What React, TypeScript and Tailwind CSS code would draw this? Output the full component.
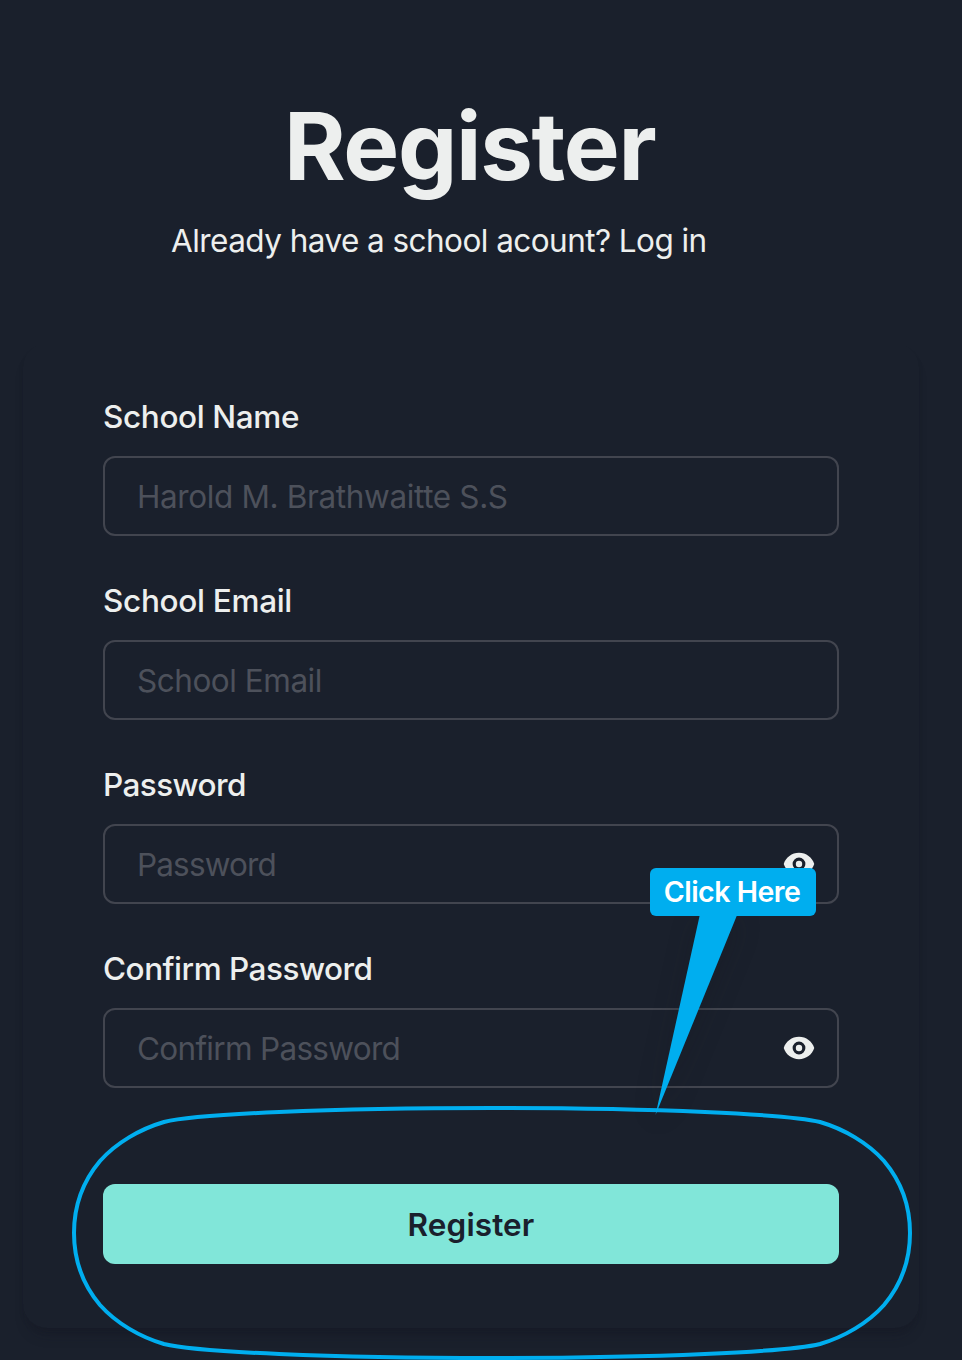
import { HiEye } from "react-icons/hi";

type FieldProps = {
  label: string;
  placeholder: string;
  labelClass: string;
  inputClass: string;
  secret?: boolean;
};

function Field({ label, placeholder, labelClass, inputClass, secret }: FieldProps) {
  return (
    <div className="flex flex-col gap-4">
      <label className={`h-12 whitespace-nowrap pt-px text-[31.5px] leading-[48px] font-medium ${labelClass}`}>{label}</label>
      <div className="flex h-20 items-center justify-between rounded-xl border-2 border-[#42454f] pr-[22px] pl-8">
        <input
          type={secret ? "password" : "text"}
          placeholder={placeholder}
          className={`h-full min-w-0 flex-1 bg-transparent text-[31.5px] outline-none placeholder:text-[#4d515b] ${inputClass}`}
        />
        {secret && <HiEye className="size-8 shrink-0" />}
      </div>
    </div>
  );
}

export default function App() {
  return (
    <main className="relative flex h-[1360px] w-[962px] flex-col overflow-hidden bg-[#1a202c] font-['Inter',sans-serif] text-[#edefee]">
      <header className="flex h-[344px] flex-col pt-[88px]">
        <h1 className="ml-[284px] h-[116px] whitespace-nowrap text-[94px] leading-[117px] font-bold tracking-[-1.3px]">Register</h1>
        <p className="mt-[13px] ml-[171px] h-12 whitespace-nowrap text-[31.5px] leading-[48px] tracking-[-0.55px]">Already have a school acount? Log in</p>
      </header>

      <form className="ml-[23px] flex h-[984px] w-[896px] flex-col rounded-[24px] px-20 pt-12 shadow-[0_12px_14px_-6px_rgba(20,20,30,0.25),0_4px_6px_-2px_rgba(20,20,30,0.2)]">
        <div className="flex flex-col gap-10">
          <Field label="School Name" placeholder="Harold M. Brathwaitte S.S" labelClass="tracking-[-0.36px]" inputClass="tracking-[-0.37px]" />
          <Field label="School Email" placeholder="School Email" labelClass="tracking-[-0.3px]" inputClass="tracking-[-0.47px]" />
          <Field label="Password" placeholder="Password" labelClass="tracking-[-0.6px]" inputClass="tracking-[-0.85px]" secret />
          <Field label="Confirm Password" placeholder="Confirm Password" labelClass="tracking-[-0.5px]" inputClass="tracking-[-0.7px]" secret />
        </div>
        <button type="button" className="mt-24 flex h-20 w-full items-center justify-center rounded-xl bg-[#81e6d9] pt-0.5 text-[31.5px] font-semibold tracking-[0.1px] text-[#1a202c]">
          <span>Register</span>
        </button>
      </form>

      <svg className="pointer-events-none absolute inset-0" width="962" height="1360" viewBox="0 0 962 1360" fill="none">
        <path
          d="M492 1108C330 1108 196 1114 164 1122C140 1129 116 1143 100 1161C84 1180 74 1205 74 1233C74 1261 84 1286 100 1305C116 1323 140 1337 164 1344C196 1352 330 1358 492 1358C654 1358 788 1352 820 1344C844 1337 868 1323 884 1305C900 1286 910 1261 910 1233C910 1205 900 1180 884 1161C868 1143 844 1129 820 1122C788 1114 654 1108 492 1108Z"
          stroke="#00aeef"
          strokeWidth="4"
        />
        <path d="M700 914H737.5L655.5 1115Z" fill="#00aeef" className="drop-shadow-[0_8px_12px_rgba(18,18,28,0.25)]" />
      </svg>
      <div className="absolute top-[868px] left-[650px] flex h-12 w-[166px] items-center justify-center rounded-md bg-[#00aeef] pr-0.5 text-[28.5px] font-semibold tracking-[-0.5px] whitespace-nowrap text-white">
        <span>Click Here</span>
      </div>
    </main>
  );
}
